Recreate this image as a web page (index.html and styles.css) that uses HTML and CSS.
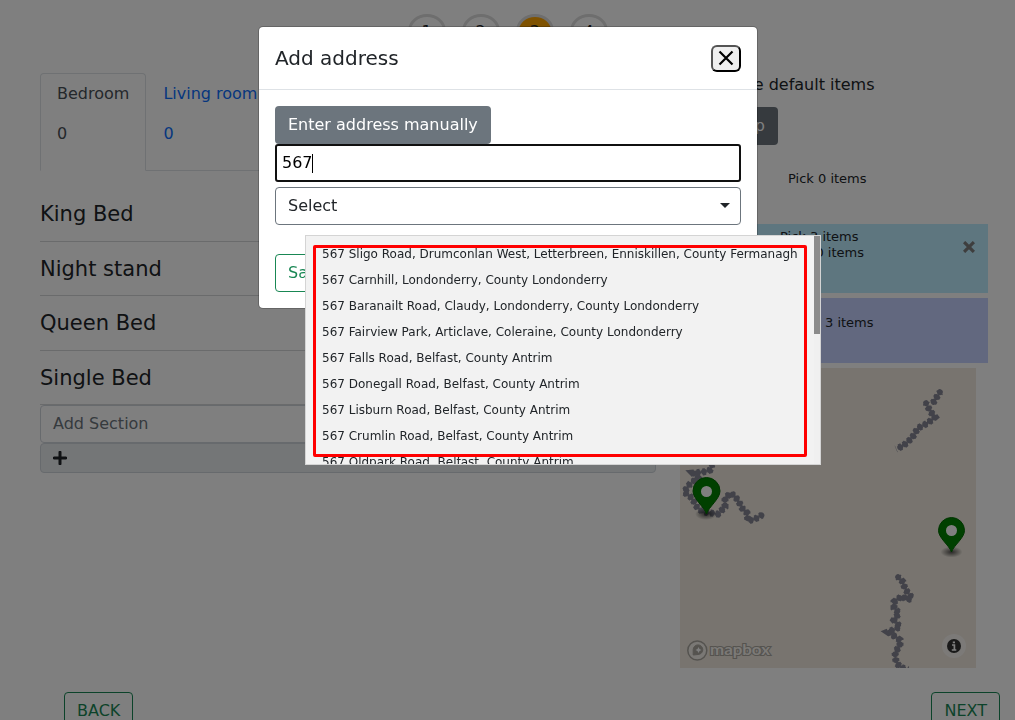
FILE: index.html
```html
<!DOCTYPE html>
<html lang="en">
<head>
<meta charset="utf-8">
<title>Add address</title>
<link rel="stylesheet" href="styles.css">
</head>
<body>
<div class="page">
  <div class="steps">
    <span class="step">1</span><span class="step">2</span><span class="step active">3</span><span class="step">4</span>
  </div>
  <div class="columns">
    <main class="rooms">
      <div class="tabs">
        <div class="tab current"><p>Bedroom</p><p>0</p></div>
        <div class="tab"><p>Living room</p><p>0</p></div>
      </div>
      <div class="sections">
        <h4>King Bed</h4>
        <h4>Night stand</h4>
        <h4>Queen Bed</h4>
        <h4>Single Bed</h4>
      </div>
      <div class="add-section">Add Section</div>
      <div class="add-button">
        <svg width="14" height="14" viewBox="0 0 14 14"><path d="M7 1.2V12.8M1.2 7H12.8" stroke="#212529" stroke-width="3" stroke-linecap="round"/></svg>
      </div>
    </main>
    <aside class="route">
      <div class="default-items">Use the default items</div>
      <div class="stop-row"><span class="stop-button">Add stop</span></div>
      <div class="stop plain">Pick 0 items</div>
      <div class="stop blue">
        <div>Pick 3 items<br>Drop 0 items</div>
        <svg class="remove" width="12" height="12" viewBox="0 0 12 12"><path d="M2.200 2.200L9.800 9.800M9.800 2.200L2.200 9.800" stroke="#7c7c7c" stroke-width="3.200" stroke-linecap="square"/></svg>
      </div>
      <div class="stop violet">Pick 3 items</div>
      <div class="map">
        <svg width="296" height="300" viewBox="0 0 296 300">
          <defs>
            <radialGradient id="shade"><stop offset="0" stop-color="#000" stop-opacity=".65"/><stop offset="1" stop-color="#000" stop-opacity="0"/></radialGradient>
          </defs>
          <g fill="none" stroke="#858593" stroke-width="5.600" stroke-dasharray=".3 5.500" stroke-linecap="round">
            <path d="M260 24L253 35M246 35L250 43L255 49L248 55L238 60L232 70L223 78L216 81"/>
            <path d="M32 97L30 102L23 104L13 105L18 110L10 116L4 124L12 130L17 139L23 144L38 146L45 139L45 130L51 125L58 132L62 140L67 145L68 153L77 150L82 147"/>
            <path d="M218 209L223 214L225 221L232 230L227 232L222 228L214 234L214 240L219 245L214 252L220 259L208 264L220 272L220 278L215 284L216 294L220 299L228 302"/>
          </g>
          <g fill="none" stroke="#858593" stroke-width="7" stroke-dasharray="3 2.800" stroke-dashoffset="1.500">
            <path d="M260 24L253 35M246 35L250 43L255 49L248 55L238 60L232 70L223 78L216 81"/>
            <path d="M32 97L30 102L23 104L13 105L18 110L10 116L4 124L12 130L17 139L23 144L38 146L45 139L45 130L51 125L58 132L62 140L67 145L68 153L77 150L82 147"/>
            <path d="M218 209L223 214L225 221L232 230L227 232L222 228L214 234L214 240L219 245L214 252L220 259L208 264L220 272L220 278L215 284L216 294L220 299L228 302"/>
          </g>
          <ellipse cx="26" cy="146" rx="11" ry="6" fill="url(#shade)"/>
          <path d="M26.500 146C24.500 139 13 131 13 123A13.500 13.500 0 0 1 40 123C40 131 28.500 139 26.500 146Z" fill="#008000" stroke="#006a00"/>
          <circle cx="26.500" cy="123.500" r="5.500" fill="#fff"/>
          <ellipse cx="271.500" cy="184" rx="11" ry="5.500" fill="url(#shade)"/>
          <path d="M271.500 184C269 177 258.500 170 258.500 162.500A13 13 0 0 1 284.500 162.500C284.500 170 274 177 271.500 184Z" fill="#008000" stroke="#006a00"/>
          <circle cx="271.500" cy="162.500" r="5.500" fill="#fff"/>
          <g fill="none" stroke="#aaa69f" stroke-width="1.500">
            <circle cx="17.300" cy="282.500" r="9.500" fill="#f4f1ea"/>
            <path d="M13.200 287V281.500A4.800 4.800 0 1 1 18 286.500Z" fill="#aaa69f" stroke-width="1"/>
            <path d="M18.500 279L19.500 281L21.500 282L19.500 283L18.500 285L17.500 283L15.500 282L17.500 281Z" fill="#fff" stroke="none"/>
          </g>
          <text class="map-brand" x="30" y="286.500" textLength="60" lengthAdjust="spacingAndGlyphs">mapbox</text>
          <circle cx="274" cy="278" r="12" fill="#fff" fill-opacity=".55"/>
          <circle cx="274" cy="278" r="7" fill="#333"/>
          <path d="M272 277H274.400V282M271.800 282H276.300M272.800 274.300H275" stroke="#fff" stroke-width="1.700" fill="none"/>
        </svg>
      </div>
    </aside>
  </div>
  <div class="pager"><span class="outline">BACK</span><span class="outline">NEXT</span></div>
</div>

<div class="backdrop"></div>
<div class="modal">
  <div class="modal-header">
    <h5>Add address</h5>
    <button class="close" aria-label="Close"><svg width="16" height="16" viewBox="0 0 16 16"><path d="M1.500 1.500L14.500 14.500M14.500 1.500L1.500 14.500" stroke="#000" stroke-width="2.200"/></svg></button>
  </div>
  <div class="modal-body">
    <span class="manual">Enter address manually</span>
    <div class="search">567<span class="cursor"></span></div>
    <div class="select"><span>Select</span><span class="caret"></span></div>
    <span class="save outline">Save</span>
  </div>
</div>
<div class="results">
  <ul>
    <li>567 Sligo Road, Drumconlan West, Letterbreen, Enniskillen, County Fermanagh</li>
    <li>567 Carnhill, Londonderry, County Londonderry</li>
    <li>567 Baranailt Road, Claudy, Londonderry, County Londonderry</li>
    <li>567 Fairview Park, Articlave, Coleraine, County Londonderry</li>
    <li>567 Falls Road, Belfast, County Antrim</li>
    <li>567 Donegall Road, Belfast, County Antrim</li>
    <li>567 Lisburn Road, Belfast, County Antrim</li>
    <li>567 Crumlin Road, Belfast, County Antrim</li>
    <li>567 Oldpark Road, Belfast, County Antrim</li>
  </ul>
  <div class="track"><div class="thumb"></div></div>
  <div class="highlight"></div>
</div>
</body>
</html>
```
FILE: styles.css
```css
* { box-sizing: border-box; }
body { margin: 0; height: 720px; overflow: hidden; background: #fff; color: #212529; font: 16px/24px "DejaVu Sans", sans-serif; }
p, h4, h5, ul { margin: 0; padding: 0; font-weight: 400; }
.page { height: 720px; overflow: hidden; padding-top: 14px; }
.steps { display: flex; justify-content: center; gap: 16px; height: 59px; }
.step { width: 38px; height: 34px; border: 3px solid #dcdcdc; border-radius: 50%; text-align: center; line-height: 29px; }
.step.active { background: #ffa500; }
.columns { display: grid; grid-template-columns: 616px 308px; gap: 24px; padding-left: 40px; height: 619px; }
.tabs { display: flex; height: 98px; border-bottom: 1px solid #dee2e6; }
.tab { height: 98px; padding: 8px 16px; border: 1px solid transparent; color: #0d6efd; white-space: nowrap; }
.tab p { margin-bottom: 16px; }
.tab.current { border-color: #dee2e6 #dee2e6 #fff; border-radius: 4px 4px 0 0; color: #495057; }
.sections { padding-top: 16px; }
.sections h4 { height: 54.500px; padding-top: 15px; border-bottom: 1px solid #d5d7d9; font-size: 21px; line-height: 25px; }
.add-section { height: 38px; padding: 6px 12px; border: 1px solid #ced4da; border-radius: 4px; color: #6c757d; }
.add-button { display: flex; align-items: center; height: 30px; padding: 0 12px; border: 1px solid #ced4da; border-radius: 4px; background: #e9ecef; }
.default-items { width: 194.500px; height: 34px; text-align: right; white-space: nowrap; }
.stop-row { display: flex; justify-content: flex-end; width: 98px; height: 47px; }
.stop-button { height: 38px; padding: 7px 13px; border-radius: 4px; background: #6c757d; color: #fff; white-space: nowrap; }
.stop { font-size: 13px; line-height: 16px; }
.stop.plain { height: 70px; padding: 17px 0 0 108px; }
.stop.blue { display: flex; justify-content: space-between; height: 69px; margin-bottom: 5px; padding: 5px 13px 0 100px; background: #bdecff; }
.remove { margin-top: 12px; }
.stop.violet { height: 65px; margin-bottom: 5px; padding: 17px 0 0 115px; background: #c4d1ff; }
.map { width: 296px; height: 300px; background: #f0e9df; }
.map svg { display: block; }
.map-brand { fill: #f8f4ee; stroke: #aaa69f; stroke-width: 2.200px; paint-order: stroke; font: bold 16px Lato, sans-serif; }
.pager { display: flex; justify-content: space-between; padding: 0 15px 0 64px; }
.outline { height: 38px; padding: 6px 12px; border: 1px solid #198754; border-radius: 4px; color: #198754; }

.backdrop { position: fixed; inset: 0; background: rgba(0, 0, 0, .5); }
.modal { position: absolute; left: 258px; top: 26px; width: 500px; height: 283px; border: 1px solid rgba(0, 0, 0, .2); border-radius: 5px; background: #fff; background-clip: padding-box; }
.modal-header { display: flex; justify-content: space-between; align-items: center; height: 63px; padding: 0 16px; border-bottom: 1px solid #dee2e6; }
.modal-header h5 { font-size: 20px; }
.close { display: flex; align-items: center; justify-content: center; width: 30px; height: 27px; padding: 0 0 1px; border: 2px outset #000; border-radius: 6px; background: #efefef; }
.modal-body { display: flex; flex-direction: column; align-items: flex-start; padding: 16px; }
.manual { height: 38px; padding: 7px 13px; border-radius: 4px; background: #6c757d; color: #fff; }
.search { display: flex; align-items: center; width: 100%; height: 38px; padding: 0 5px; border: 2px solid #101010; border-radius: 3px; background: #fff; color: #000; }
.cursor { width: 1px; height: 19px; margin-left: -1px; background: #000; }
.select { display: flex; align-items: center; justify-content: space-between; width: 100%; height: 38px; margin: 5px 0 29px; padding: 0 10px 0 12px; border: 1px solid #6c757d; border-radius: 4px; }
.caret { margin-top: -1px; border: 5px solid transparent; border-top-color: #212529; border-bottom: 0; }

.results { position: absolute; left: 305px; top: 235px; width: 516px; height: 230px; overflow: hidden; border: 1px solid #d4d4d4; background: #f2f2f2; }
.results ul { padding: 5px 0 0 16px; list-style: none; font-size: 12px; line-height: 26px; white-space: nowrap; }
.track { position: absolute; right: 0; top: 0; width: 6px; height: 100%; background: #f0f0f0; }
.thumb { height: 98px; background: #8b8b8b; }
.highlight { position: absolute; left: 7px; top: 9px; width: 494px; height: 212px; border: 3px solid #f00; border-radius: 2px; }
```
